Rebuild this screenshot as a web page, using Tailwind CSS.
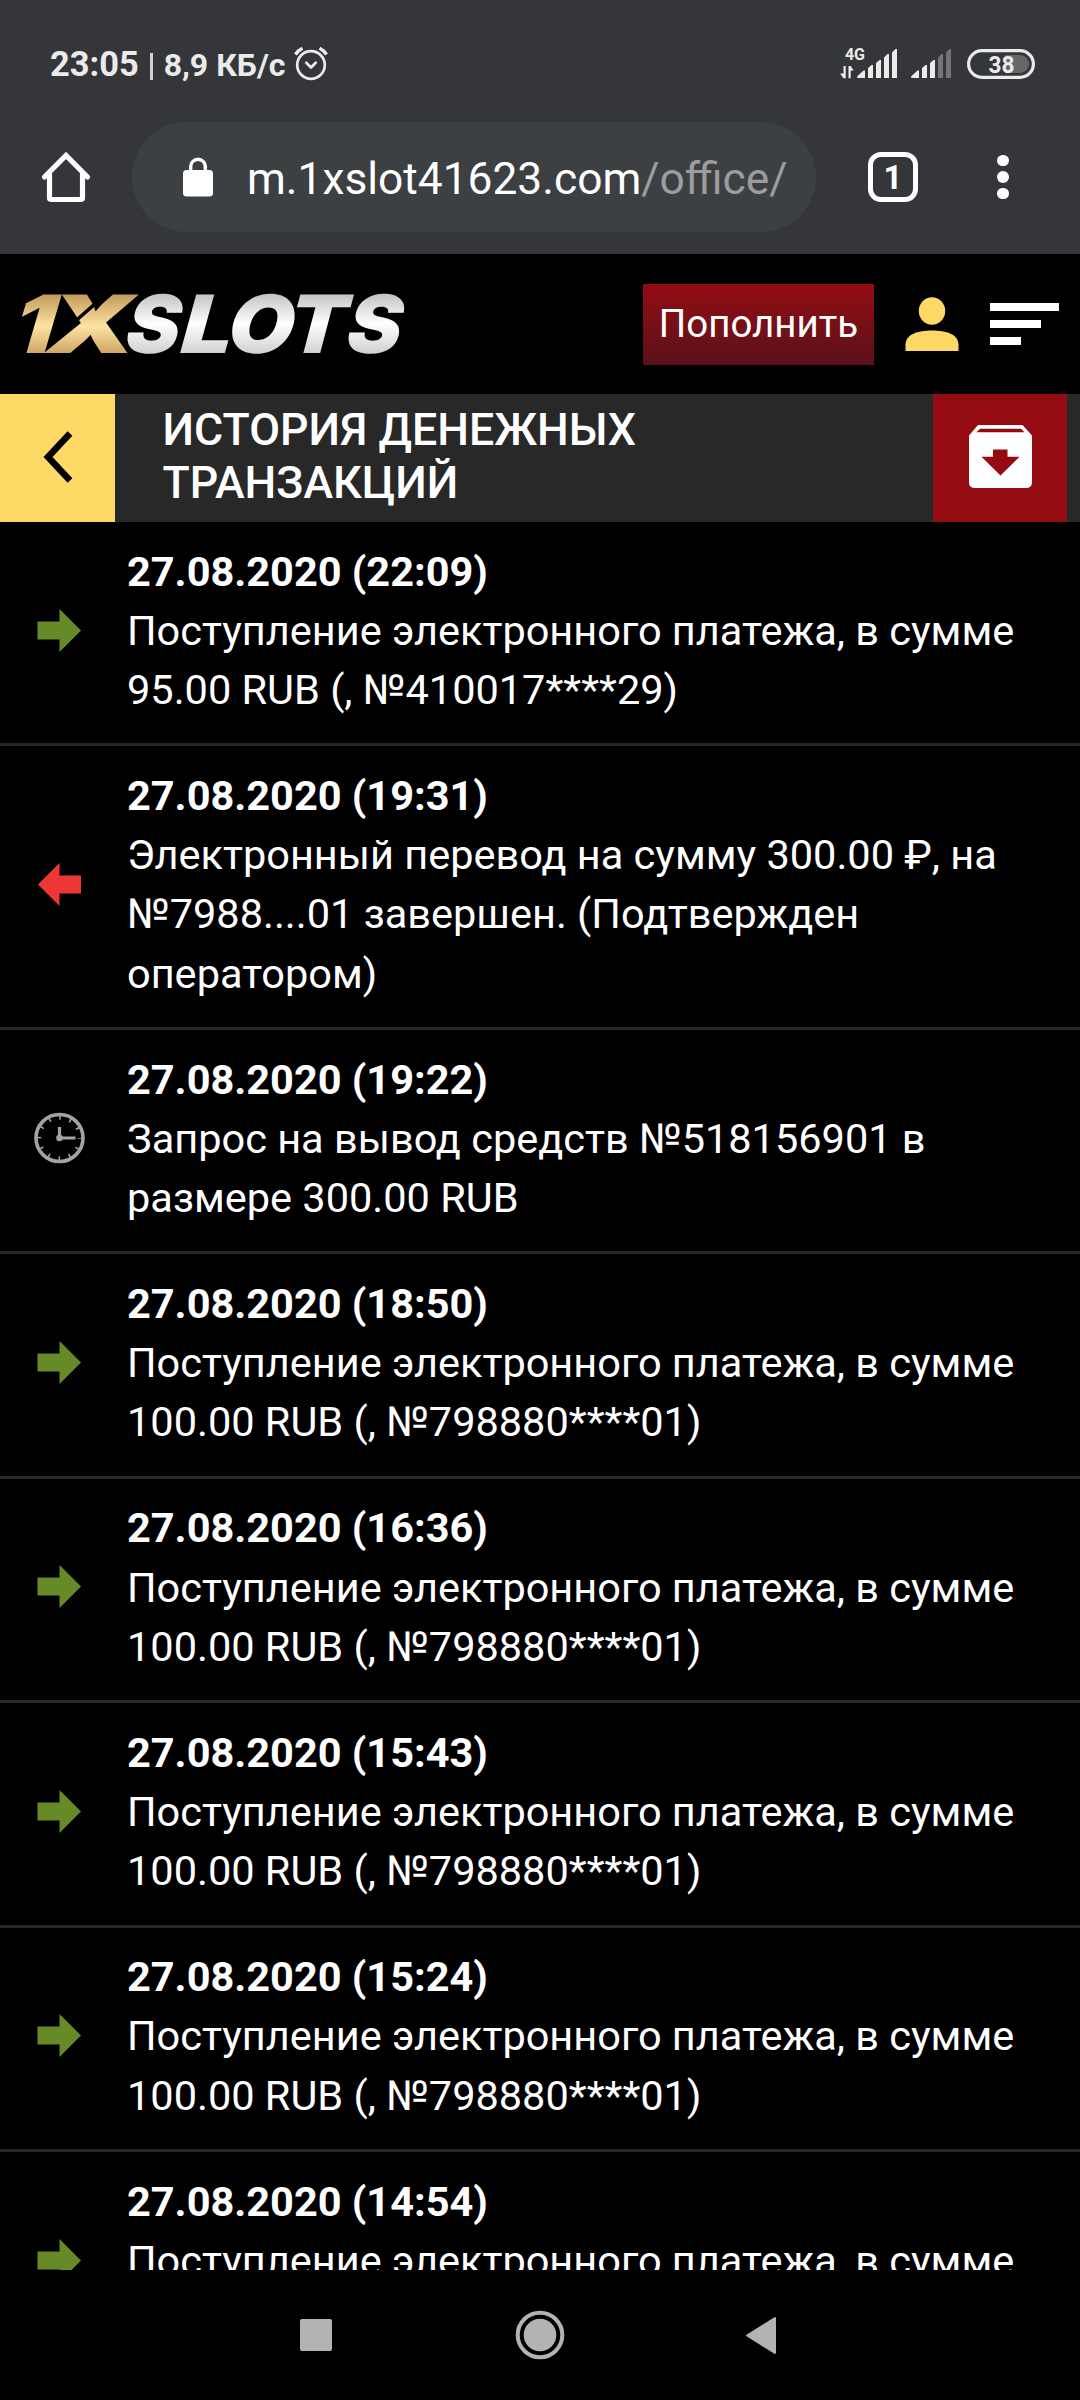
<!DOCTYPE html>
<html lang="ru">
<head>
<meta charset="utf-8">
<title>История денежных транзакций</title>
<script src="https://cdn.jsdelivr.net/npm/@tailwindcss/browser@4"></script>
</head>
<body class="flex h-[2400px] w-[1080px] flex-col overflow-hidden bg-black font-[Roboto,sans-serif] text-white">

<svg class="hidden">
  <symbol id="in" viewBox="0 0 44 43"><path d="M.5 12.5H22.500V0L44 21.500 22.500 43V30.500H.5z" fill="#678a28"/></symbol>
  <symbol id="out" viewBox="0 0 44 43"><path d="M44 12.500H22.500V0L1 21.500 22.500 43V30.500H44z" fill="#ed3737"/></symbol>
</svg>

<div class="h-[254px] shrink-0 bg-[#35363a]">
  <div class="flex h-[122px] items-center pt-[6px] pl-[50px] text-[#ebebeb]">
    <span class="text-[34.4px] font-bold leading-none">23:05</span>
    <span class="ml-[11px] mt-[4px] h-[27px] w-[3px] bg-[#d0d0d1]"></span>
    <span class="ml-[11px] mt-[2px] text-[32px] font-bold leading-none">8,9 КБ/с</span>
    <svg class="ml-[8px] h-[36px] w-[36px]" viewBox="0 0 36 36" fill="none" stroke="#ebebeb" stroke-width="2.700" stroke-linecap="round" stroke-linejoin="round">
      <circle cx="18" cy="19" r="13.800"/><path d="M13.300 16.800 18 21.500 22.700 16.800"/><path d="M2.500 8.500Q5 4.500 9.500 2.300M26.500 2.300Q31 4.500 33.500 8.500" stroke-width="3.400" stroke-linecap="butt"/>
    </svg>
    <svg class="ml-auto mr-[44px] h-[36px] w-[197px]" viewBox="839 45 197 36" fill="#ebebeb">
      <text x="845" y="58.500" font-size="16" font-weight="700" textLength="20">4G</text>
      <path d="M843.500 65h2.200v12.200h-2.200L840 72.500h3.500zM848.500 65h2.200l3 4.500h-3v7.700h-2.200z"/>
      <path d="M857 75.500l6-5.500q2-1.500 2 .5v6.500h-7q-1 0-1-1.500zM868 67l3.500-3h1.500v13h-5zM876 62l3.500-3h1.500v18h-5zM884 56.500l3.500-3.500h1.500v24h-5zM892 51.500l3.500-3.500h1.500v29h-5z"/>
      <path d="M911 75.500l6-5.500q2-1.500 2 .5v6.500h-7q-1 0-1-1.500zM922 67l3.500-3h1.500v13h-5zM930 62l3.500-3h1.500v18h-5z"/>
      <path d="M938 56.500l3.500-3.500h1.500v24h-5zM946 51.500l3.500-3.500h1.500v29h-5z" fill="#737477"/>
      <path d="M1005 54h15a9 9 0 0 1 0 18h-15z" fill="#66676b"/>
      <rect x="968.600" y="49.600" width="64.800" height="26.800" rx="13.400" fill="none" stroke="#ebebeb" stroke-width="3.200"/>
      <text x="988.500" y="72" font-size="24.500" font-weight="700" textLength="26" lengthAdjust="spacingAndGlyphs">38</text>
    </svg>
  </div>

  <div class="flex h-[110px] items-center">
    <svg class="ml-[40px] h-[52px] w-[52px] shrink-0" viewBox="0 0 52 52" fill="none" stroke="#fff" stroke-width="5.200" stroke-linejoin="round" stroke-linecap="round"><path d="M9.500 23V46.500q0 2 2 2H40.500q2 0 2-2V23"/><path d="M4.500 26 26 4.500 47.500 26" stroke-linejoin="miter"/></svg>
    <div class="ml-[40px] flex h-[110px] w-[684px] shrink-0 items-center rounded-full bg-[#3c4043]">
      <svg class="ml-[51px] h-[40px] w-[30px]" viewBox="0 0 30 40"><rect y="13" width="30" height="26.500" rx="3.500" fill="#fff"/><path d="M7.700 14V9.500a7.300 7.300 0 0 1 14.600 0V14" fill="none" stroke="#fff" stroke-width="3.400"/></svg>
      <span class="ml-[34px] mt-[4px] whitespace-nowrap text-[44.3px] leading-none">m.1xslot41623.com<span class="text-[#9b9d9f]">/office/</span></span>
    </div>
    <div class="ml-[52px] flex h-[50px] w-[50px] shrink-0 items-center justify-center rounded-[13px] border-[5.500px] border-white text-[33px] font-bold leading-none">1</div>
    <div class="ml-[79px] flex flex-col gap-[5px]">
      <span class="size-[11.500px] rounded-full bg-white"></span><span class="size-[11.500px] rounded-full bg-white"></span><span class="size-[11.500px] rounded-full bg-white"></span>
    </div>
  </div>
</div>

<header class="flex h-[140px] shrink-0 items-start bg-black">
  <svg class="h-[140px] w-[416px] shrink-0" viewBox="0 254 416 140" font-family="Inter" font-weight="900" font-style="italic" font-size="80.500">
    <defs>
      <linearGradient id="gold" gradientUnits="userSpaceOnUse" x1="0" y1="-59" x2="0" y2="0"><stop offset="0" stop-color="#c29a5b"/><stop offset=".55" stop-color="#fde3a3"/><stop offset="1" stop-color="#cfa566"/></linearGradient>
      <linearGradient id="silver" gradientUnits="userSpaceOnUse" x1="0" y1="-60" x2="0" y2="1"><stop offset="0" stop-color="#c0c0c3"/><stop offset=".5" stop-color="#fff"/><stop offset="1" stop-color="#cfcfd1"/></linearGradient>
    </defs>
    <g fill="url(#gold)">
      <text transform="translate(11.500 353) skewX(-6) scale(1.140 1)">1</text>
      <text transform="translate(46.500 353) skewX(-1) scale(1.400 1)">X</text>
    </g>
    <path d="M50 343.500 109 291.500" stroke="#000" stroke-width="3.600"/>
    <g fill="url(#silver)">
      <text transform="translate(124.400 353) skewX(-5) scale(1.010 1)">S</text>
      <text transform="translate(180 353) skewX(-5) scale(1.130 1)">L</text>
      <text transform="translate(226.600 353) skewX(-5) scale(1.060 1)">O</text>
      <text transform="translate(286.500 353) skewX(-5) scale(1.055 1)">T</text>
      <text transform="translate(345.500 353) skewX(-5) scale(1.020 1)">S</text>
    </g>
  </svg>
  <div class="ml-[227px] mt-[30px] flex h-[81px] w-[231px] items-center justify-center bg-linear-to-b from-[#940b12] to-[#5b1018] text-[38.500px] leading-none">Пополнить</div>
  <svg class="ml-[31px] mt-[43px] h-[54px] w-[54px]" viewBox="0 0 54 54" fill="#ffd966"><ellipse cx="27" cy="14" rx="13.200" ry="13.700"/><path d="M.5 54V48C.5 37 13 33.500 27 33.500S53.500 37 53.500 48V54z"/></svg>
  <div class="ml-[31px] mt-[49px] flex flex-col gap-[9px]">
    <span class="h-[8px] w-[69px] bg-white"></span><span class="h-[8px] w-[51px] bg-white"></span><span class="h-[8px] w-[31px] bg-white"></span>
  </div>
</header>

<div class="flex h-[128px] shrink-0 bg-[#282828]">
  <div class="flex w-[115px] items-center justify-center bg-[#ffd966] pb-[3px]">
    <svg class="h-[52px] w-[30px]" viewBox="0 0 30 52" fill="none" stroke="#000" stroke-width="6.600"><path d="M27 2.500 5 26 27 49.500"/></svg>
  </div>
  <h1 class="flex-1 pt-[10px] pl-[47.500px] text-[44.700px] font-medium leading-[53px]">ИСТОРИЯ ДЕНЕЖНЫХ<br>ТРАНЗАКЦИЙ</h1>
  <div class="mr-[13px] flex w-[134px] items-center justify-center bg-[#940b12] pb-[3px]">
    <svg class="h-[63px] w-[63px]" viewBox="0 0 63 63"><path fill="#fff" fill-rule="evenodd" d="M9 0H53.500L63 10.500V57q0 6-6 6H6q-6 0-6-6V10.500zM11 3.700 7.500 7.200H55.500L52 3.700zM24 24.500V31.700H12.500L31.500 50.500 50.500 31.700H38.500V24.500z"/></svg>
  </div>
</div>

<main class="h-[1748px] shrink-0 overflow-hidden text-[41.500px] leading-[59.200px] whitespace-nowrap">
  <div class="flex border-b-3 border-[#282828]">
    <div class="flex w-[127px] items-center pb-[5px] pl-[36.500px]"><svg class="h-[43px] w-[44px]"><use href="#in"/></svg></div>
    <div class="pt-[19.600px] pb-[24.200px]"><b class="block font-bold">27.08.2020 (22:09)</b>Поступление электронного платежа, в сумме<br>95.00 RUB (, №410017****29)</div>
  </div>
  <div class="flex border-b-3 border-[#282828]">
    <div class="flex w-[127px] items-center pb-[5px] pl-[36.500px]"><svg class="h-[43px] w-[44px]"><use href="#out"/></svg></div>
    <div class="pt-[19.600px] pb-[24.200px]"><b class="block font-bold">27.08.2020 (19:31)</b>Электронный перевод на сумму 300.00 ₽, на<br>№7988....01 завершен. (Подтвержден<br>оператором)</div>
  </div>
  <div class="flex border-b-3 border-[#282828]">
    <div class="flex w-[127px] items-center pb-[5px] pl-[33.500px]">
      <svg class="h-[52px] w-[51px]" viewBox="-25.500 -26 51 52" fill="none" stroke="#a3a3a3">
        <circle r="23.500" stroke-width="3.600"/>
        <circle r="20.300" stroke-width="4" stroke-dasharray="1.600 9.029" stroke-dashoffset=".8"/>
        <path d="M0-11V0H16" stroke-width="3.200"/><circle r="3.300" fill="#a3a3a3" stroke="none"/>
      </svg>
    </div>
    <div class="pt-[19.600px] pb-[24.200px]"><b class="block font-bold">27.08.2020 (19:22)</b>Запрос на вывод средств №518156901 в<br>размере 300.00 RUB</div>
  </div>
  <div class="flex border-b-3 border-[#282828]">
    <div class="flex w-[127px] items-center pb-[5px] pl-[36.500px]"><svg class="h-[43px] w-[44px]"><use href="#in"/></svg></div>
    <div class="pt-[19.600px] pb-[24.200px]"><b class="block font-bold">27.08.2020 (18:50)</b>Поступление электронного платежа, в сумме<br>100.00 RUB (, №798880****01)</div>
  </div>
  <div class="flex border-b-3 border-[#282828]">
    <div class="flex w-[127px] items-center pb-[5px] pl-[36.500px]"><svg class="h-[43px] w-[44px]"><use href="#in"/></svg></div>
    <div class="pt-[19.600px] pb-[24.200px]"><b class="block font-bold">27.08.2020 (16:36)</b>Поступление электронного платежа, в сумме<br>100.00 RUB (, №798880****01)</div>
  </div>
  <div class="flex border-b-3 border-[#282828]">
    <div class="flex w-[127px] items-center pb-[5px] pl-[36.500px]"><svg class="h-[43px] w-[44px]"><use href="#in"/></svg></div>
    <div class="pt-[19.600px] pb-[24.200px]"><b class="block font-bold">27.08.2020 (15:43)</b>Поступление электронного платежа, в сумме<br>100.00 RUB (, №798880****01)</div>
  </div>
  <div class="flex border-b-3 border-[#282828]">
    <div class="flex w-[127px] items-center pb-[5px] pl-[36.500px]"><svg class="h-[43px] w-[44px]"><use href="#in"/></svg></div>
    <div class="pt-[19.600px] pb-[24.200px]"><b class="block font-bold">27.08.2020 (15:24)</b>Поступление электронного платежа, в сумме<br>100.00 RUB (, №798880****01)</div>
  </div>
  <div class="flex border-b-3 border-[#282828]">
    <div class="flex w-[127px] items-center pb-[5px] pl-[36.500px]"><svg class="h-[43px] w-[44px]"><use href="#in"/></svg></div>
    <div class="pt-[19.600px] pb-[83.400px]"><b class="block font-bold">27.08.2020 (14:54)</b>Поступление электронного платежа, в сумме</div>
  </div>
</main>

<nav class="flex h-[130px] shrink-0 items-center bg-black">
  <span class="ml-[300px] size-[32px] rounded-[2px] bg-[#b3b3b3]"></span>
  <svg class="ml-[183px] size-[50px]" viewBox="-25 -25 50 50"><circle r="22.300" fill="none" stroke="#b3b3b3" stroke-width="4"/><circle r="16.300" fill="#b3b3b3"/></svg>
  <svg class="ml-[180px] h-[37px] w-[31px]" viewBox="0 0 31 37"><path d="M30 1V36L2 18.500z" fill="#b3b3b3" stroke="#b3b3b3" stroke-width="2" stroke-linejoin="round"/></svg>
</nav>
</body>
</html>
